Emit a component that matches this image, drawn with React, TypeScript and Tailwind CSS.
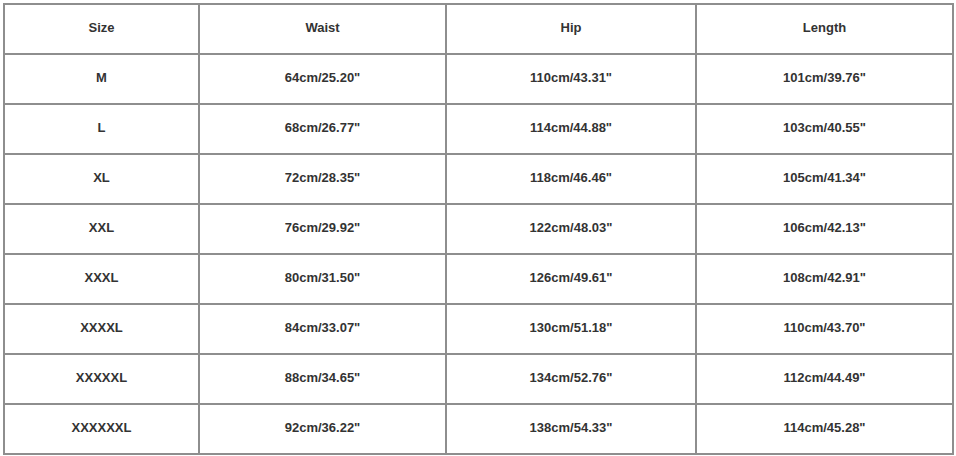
import React from "react";

const rows: string[][] = [
  ["Size", "Waist", "Hip", "Length"],
  ["M", "64cm/25.20\"", "110cm/43.31\"", "101cm/39.76\""],
  ["L", "68cm/26.77\"", "114cm/44.88\"", "103cm/40.55\""],
  ["XL", "72cm/28.35\"", "118cm/46.46\"", "105cm/41.34\""],
  ["XXL", "76cm/29.92\"", "122cm/48.03\"", "106cm/42.13\""],
  ["XXXL", "80cm/31.50\"", "126cm/49.61\"", "108cm/42.91\""],
  ["XXXXL", "84cm/33.07\"", "130cm/51.18\"", "110cm/43.70\""],
  ["XXXXXL", "88cm/34.65\"", "134cm/52.76\"", "112cm/44.49\""],
  ["XXXXXXL", "92cm/36.22\"", "138cm/54.33\"", "114cm/45.28\""],
];

export default function App() {
  return (
    <div className="w-[956px] h-[456px] bg-white overflow-hidden">
      <div
        className="ml-[3px] mt-[3px] w-[951px] p-[2px] bg-[#8e8e8e] grid grid-cols-[193px_245px_248px_255px] auto-rows-[48px] gap-[2px]"
        style={{ fontFamily: '"Liberation Sans", Arial, sans-serif' }}
      >
        {rows.flatMap((r, i) =>
          r.map((c, j) => (
            <div
              key={`${i}-${j}`}
              className="bg-white flex items-center justify-center pb-[2px] text-[13px] font-bold text-[#333333]"
            >
              {c}
            </div>
          ))
        )}
      </div>
    </div>
  );
}
